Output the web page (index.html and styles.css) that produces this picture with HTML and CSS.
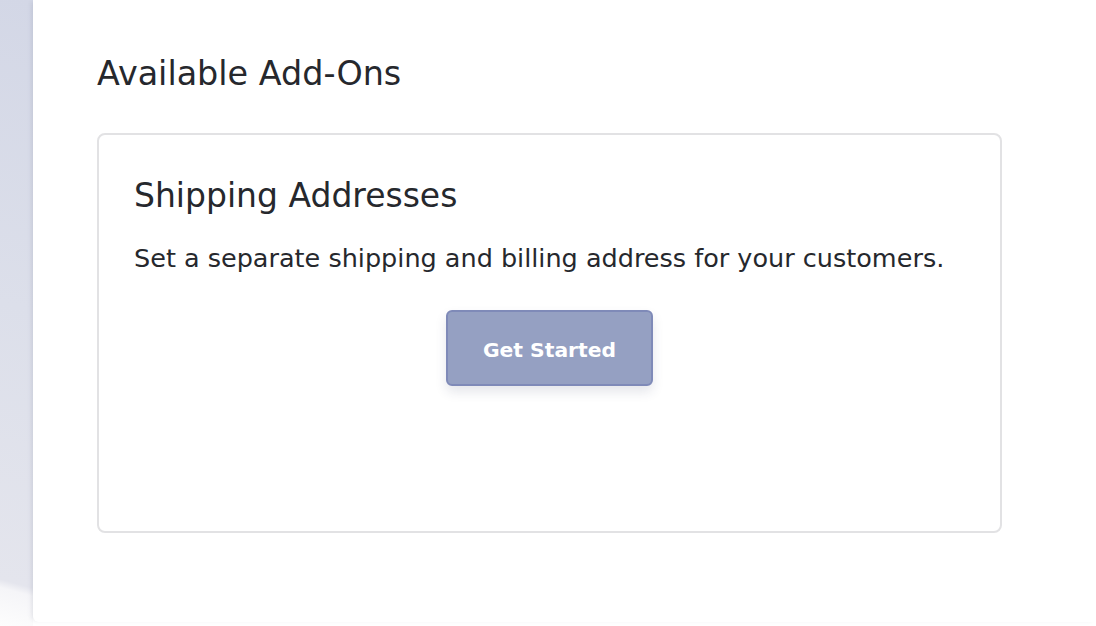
FILE: index.html
```html
<!DOCTYPE html>
<html>
<head>
<meta charset="utf-8">
<link rel="stylesheet" href="styles.css">
</head>
<body>
<div class="layout">
  <aside class="sidebar"></aside>
  <main class="main">
    <h1 class="page-title">Available Add-Ons</h1>
    <section class="addon-card">
      <h2 class="addon-title">Shipping Addresses</h2>
      <p class="addon-desc">Set a separate shipping and billing address for your customers.</p>
      <div class="addon-actions">
        <button class="btn-primary">Get Started</button>
      </div>
    </section>
  </main>
</div>
</body>
</html>
```
FILE: styles.css
```css
* { box-sizing: border-box; }
html, body { margin: 0; padding: 0; }
body {
  width: 1096px;
  height: 626px;
  overflow: hidden;
  background: #fff;
  font-family: "DejaVu Sans", "Open Sans", sans-serif;
  color: #26282d;
}
.layout {
  display: flex;
  height: 626px;
}
.sidebar {
  width: 33px;
  flex: none;
  background: linear-gradient(195deg, #d3d7e6 0, #dcdfea 300px, #e4e5ed 568px, #f5f5f8 576px, #fdfdfd 613px);
}
.main {
  flex: 1;
  height: 622px;
  background: #fff;
  border-bottom-left-radius: 6px;
  box-shadow: -3px 0 5px -2px rgba(60, 64, 90, 0.14);
  padding: 51px 0 0 64px;
}
.page-title {
  margin: 0;
  font-size: 33.4px;
  font-weight: 400;
  line-height: 46px;
}
.addon-card {
  margin-top: 36px;
  width: 905px;
  height: 400px;
  border: 2px solid #e2e2e4;
  border-radius: 8px;
  padding: 40px 35px 0 35px;
}
.addon-title {
  margin: 0;
  font-size: 33px;
  font-weight: 400;
  line-height: 42px;
}
.addon-desc {
  margin: 25px 0 0 0;
  font-size: 25.5px;
  line-height: 32px;
}
.addon-actions {
  display: flex;
  justify-content: center;
  margin-top: 36px;
}
.btn-primary {
  width: 207px;
  height: 76px;
  background: #95a0c2;
  border: 2px solid #7f8ab8;
  border-radius: 6px;
  color: #fff;
  font-family: "DejaVu Sans", sans-serif;
  font-size: 20.3px;
  font-weight: 700;
  box-shadow: 0 6px 12px rgba(40, 50, 90, 0.12);
  padding: 3px 0 0 0;
}
```
